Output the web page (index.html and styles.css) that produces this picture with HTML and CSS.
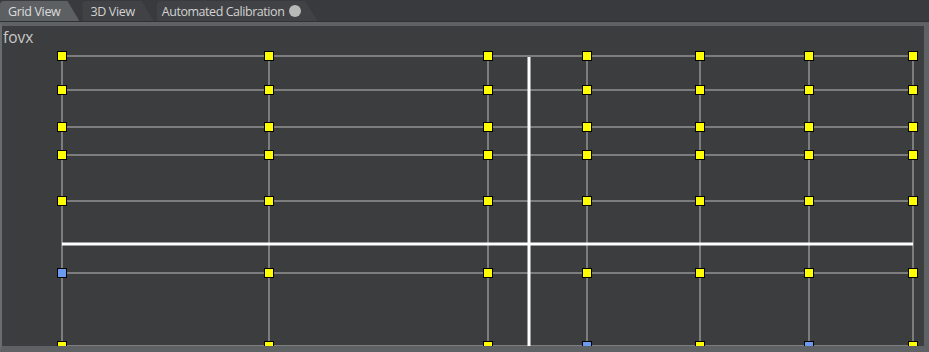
FILE: index.html
```html
<!DOCTYPE html>
<html lang="en">
<head>
    <meta charset="UTF-8">
    <meta name="viewport" content="width=device-width, initial-scale=1.0">
    <title>Grid View</title>
    <link rel="stylesheet" href="styles.css">
</head>
<body>
    <div class="window">
        <!-- Pestañas -->
        <div class="tabbar">
            <div class="tab active">Grid View</div>
            <div class="tab">3D View</div>
            <div class="tab tab-calib">Automated Calibration <span class="dot"></span></div>
        </div>

        <!-- Panel -->
        <div class="panel">
            <div class="plot">
                <span class="label">fovx</span>
                <svg class="grid" viewBox="2 26 922 320" preserveAspectRatio="none">
                    <g class="lines">
                        <line x1="62" y1="56" x2="62" y2="350"/>
                        <line x1="269" y1="56" x2="269" y2="350"/>
                        <line x1="488" y1="56" x2="488" y2="350"/>
                        <line x1="587" y1="56" x2="587" y2="350"/>
                        <line x1="700" y1="56" x2="700" y2="350"/>
                        <line x1="809" y1="56" x2="809" y2="350"/>
                        <line x1="913" y1="56" x2="913" y2="350"/>
                        <line x1="62" y1="56" x2="913" y2="56"/>
                        <line x1="62" y1="90" x2="913" y2="90"/>
                        <line x1="62" y1="127" x2="913" y2="127"/>
                        <line x1="62" y1="155" x2="913" y2="155"/>
                        <line x1="62" y1="201" x2="913" y2="201"/>
                        <line x1="62" y1="273" x2="913" y2="273"/>
                        <line x1="62" y1="346" x2="913" y2="346"/>
                    </g>
                    <g class="axes">
                        <line x1="62" y1="244" x2="913" y2="244"/>
                        <line x1="529" y1="57" x2="529" y2="350"/>
                    </g>
                    <g id="points"></g>
                </svg>
            </div>
        </div>
    </div>

    <script>
        // Puntos de la cuadrícula
        const cols = [62, 269, 488, 587, 700, 809, 913];
        const rows = [56, 90, 127, 155, 201, 273, 346];
        const blue = ['62,273', '587,346', '809,346'];
        const points = document.getElementById('points');

        rows.forEach(function(y) {
            cols.forEach(function(x) {
                const r = document.createElementNS('http://www.w3.org/2000/svg', 'rect');
                r.setAttribute('x', x - 4.5);
                r.setAttribute('y', y - 4.5);
                r.setAttribute('width', 9);
                r.setAttribute('height', 9);
                r.setAttribute('class', blue.includes(x + ',' + y) ? 'pt blue' : 'pt');
                points.appendChild(r);
            });
        });
    </script>
</body>
</html>
```

FILE: styles.css
```css
* {
    margin: 0;
    padding: 0;
    box-sizing: border-box;
}

body {
    background-color: #3a3c3e;
    font-family: "Open Sans", Arial, sans-serif;
    overflow: hidden;
}

.window {
    width: 929px;
    height: 352px;
    display: flex;
    flex-direction: column;
}

/* Pestañas */
.tabbar {
    height: 22px;
    display: flex;
    align-items: flex-end;
    background-color: #383a3d;
    border-bottom: 1px solid #2f3133;
}

.tab {
    height: 20px;
    display: flex;
    align-items: center;
    gap: 5px;
    padding: 0 19px 0 8px;
    margin-right: 3px;
    font-size: 12.5px;
    letter-spacing: -0.35px;
    color: #d2d2d2;
    background-color: #404245;
    border-radius: 4px 0 0 0;
    clip-path: polygon(0 0, calc(100% - 12px) 0, 100% 100%, 0 100%);
}

.tab.active {
    background-color: #5d6063;
    color: #dcdcdc;
}

.tab-calib {
    padding: 0 16px 0 5px;
    letter-spacing: -0.45px;
}

.dot {
    width: 12px;
    height: 12px;
    border-radius: 50%;
    background-color: #b9b9b9;
}

/* Panel */
.panel {
    flex: 1;
    background-color: #5f6264;
    border-top: 4px solid #5f6264;
    border-left: 2px solid #6a6d6f;
    border-right: 5px solid #5f6264;
    border-bottom: 6px solid #5f6264;
}

.plot {
    position: relative;
    width: 100%;
    height: 100%;
    background-color: #3c3d3f;
    overflow: hidden;
}

.label {
    position: absolute;
    left: 1px;
    top: 2px;
    font-size: 15.5px;
    color: #c8c8c8;
    line-height: 18px;
}

.grid {
    display: block;
    width: 100%;
    height: 100%;
}

.lines line {
    stroke: #7d7d7d;
    stroke-width: 2;
}

.axes line {
    stroke: #ffffff;
    stroke-width: 3;
}

.pt {
    fill: #ffff00;
    stroke: #000000;
    stroke-width: 1;
}

.pt.blue {
    fill: #6b9bf0;
}
```
